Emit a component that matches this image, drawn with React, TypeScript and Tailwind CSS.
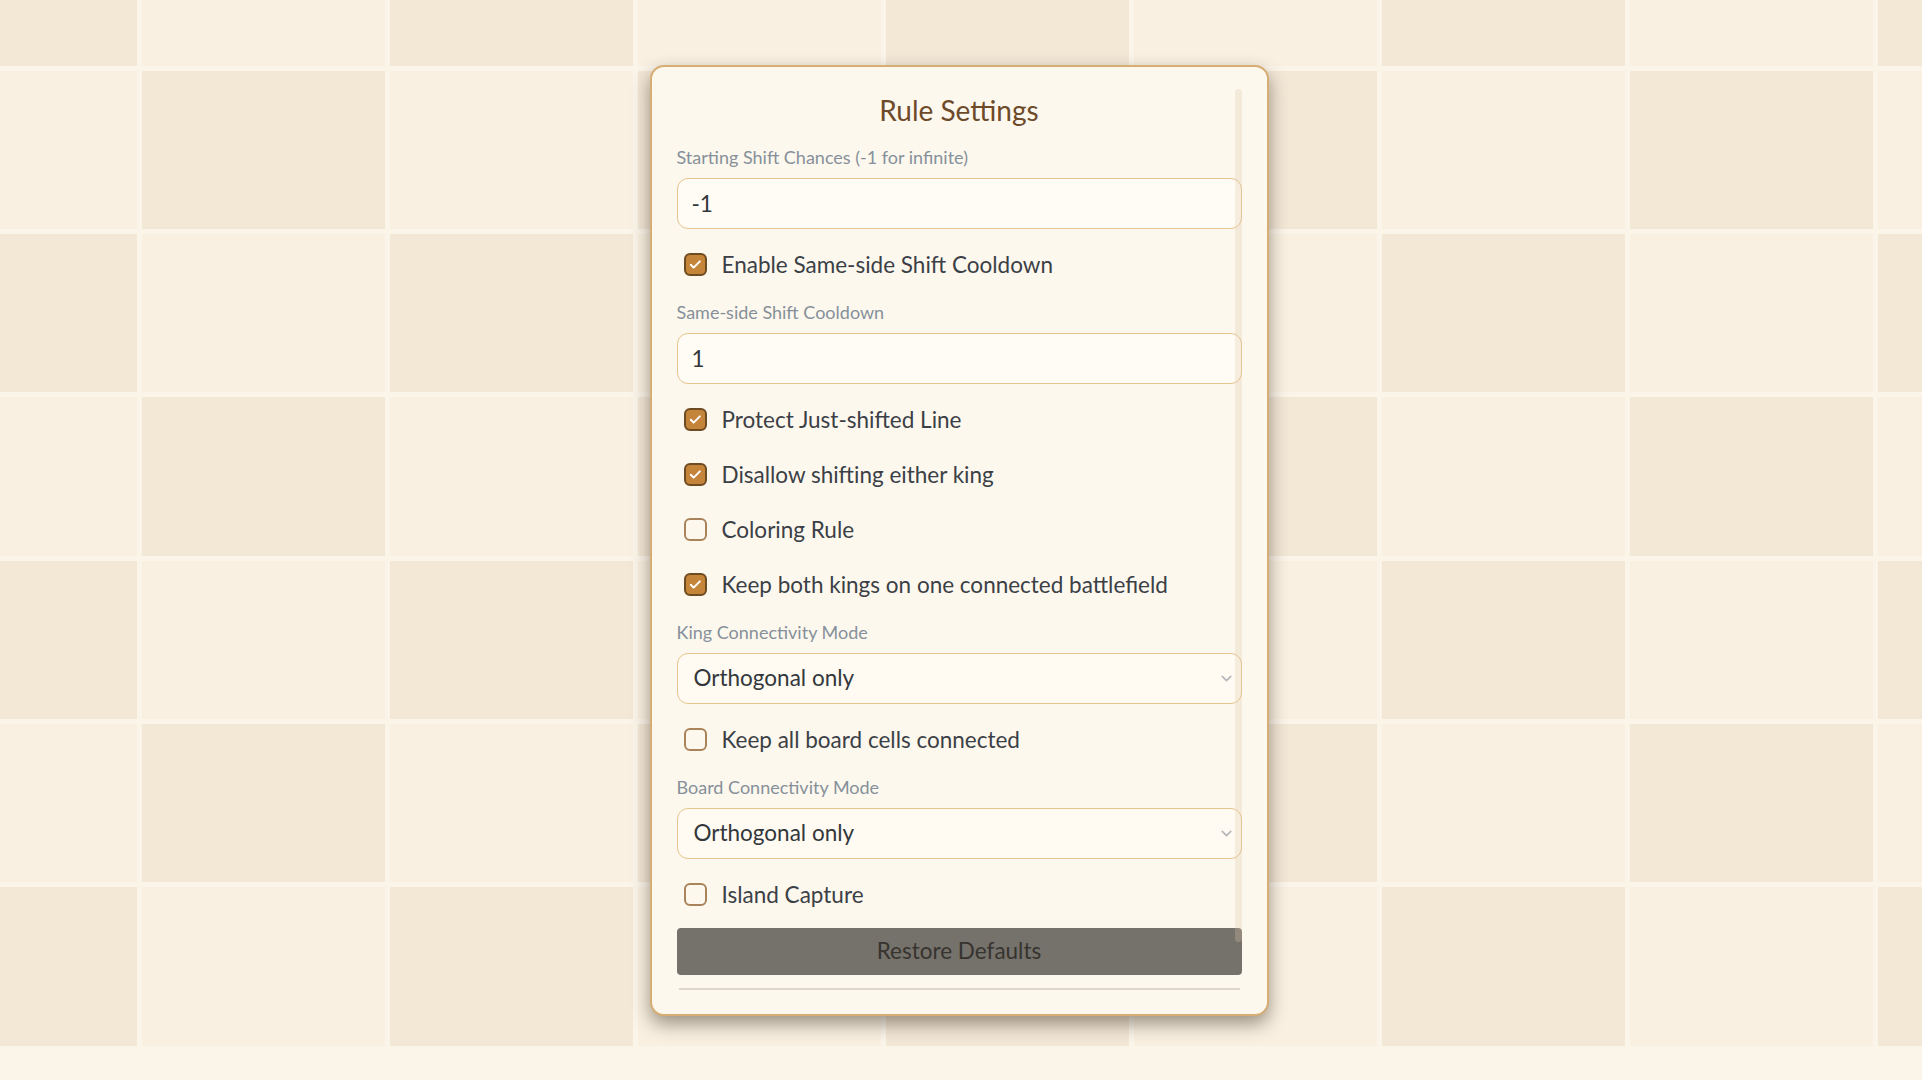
import { useState } from 'react';
import { ChevronDown } from 'lucide-react';

// Board background: 9 columns x 7 rows, offset so the cells sit like the screenshot
const COLS = 9;
const ROWS = 7;

function BoardBackground() {
  const cells = [];
  for (let r = 0; r < ROWS; r++) {
    for (let c = 0; c < COLS; c++) {
      cells.push(
        <div key={`${r}-${c}`} className={(r + c) % 2 === 0 ? 'bg-[#f3e7d6]' : 'bg-[#f9f0e1]'} />
      );
    }
  }
  return (
    <div className="absolute inset-0 overflow-hidden">
      <div className="-ml-[106.5px] -mt-[92.8px] grid grid-cols-[repeat(9,243px)] grid-rows-[repeat(7,158.33px)] gap-[5px]">
        {cells}
      </div>
    </div>
  );
}

function FieldLabel({ children }: { children: React.ReactNode }) {
  return <div className="h-[22px] text-[18px] leading-[22px] text-[#86909a]">{children}</div>;
}

function CheckRow({
  label,
  checked,
  onToggle,
}: {
  label: string;
  checked: boolean;
  onToggle: () => void;
}) {
  return (
    <label className="flex h-[38px] cursor-pointer items-center gap-[15px] pl-[7px]" onClick={onToggle}>
      {checked ? (
        <span className="flex h-[23px] w-[23px] items-center justify-center rounded-[6px] border-2 border-[#6f4b22] bg-[#c4843a]">
          <svg viewBox="0 0 24 24" className="h-[15px] w-[15px]" fill="none" stroke="#ffffff" strokeWidth={3.2} strokeLinecap="round" strokeLinejoin="round">
            <path d="M4.5 12.5l4.5 4.5 10-10" />
          </svg>
        </span>
      ) : (
        <span className="h-[23px] w-[23px] rounded-[6px] border-2 border-[#a9835a] bg-[#fdf8ee]" />
      )}
      <span className="text-[22.5px] leading-[38px] text-[#3b4046]">{label}</span>
    </label>
  );
}

function SelectBox({ value, onChange }: { value: string; onChange: (v: string) => void }) {
  return (
    <div className="relative">
      <select
        value={value}
        onChange={(e) => onChange(e.target.value)}
        className="h-[51px] w-full appearance-none rounded-[11px] border-[1.5px] border-[#e6c48f] bg-[#fffbf2] pl-[16px] text-[22.5px] text-[#33373b] outline-none"
      >
        <option>Orthogonal only</option>
        <option>Orthogonal and diagonal</option>
      </select>
      <ChevronDown className="pointer-events-none absolute right-[7px] top-[17px] h-[17px] w-[17px] text-[#b9b7bd]" strokeWidth={2.4} />
    </div>
  );
}

export default function App() {
  const [chances, setChances] = useState('-1');
  const [cooldown, setCooldown] = useState('1');
  const [flags, setFlags] = useState({
    cooldown: true,
    protect: true,
    noKing: true,
    coloring: false,
    kings: true,
    cells: false,
    island: false,
  });
  const [kingMode, setKingMode] = useState('Orthogonal only');
  const [boardMode, setBoardMode] = useState('Orthogonal only');

  const toggle = (key: keyof typeof flags) => setFlags((f) => ({ ...f, [key]: !f[key] }));

  return (
    <div className="relative flex h-screen w-full items-center justify-center overflow-hidden bg-[#fbf4e9] font-['Lato','Open_Sans',sans-serif]">
      <BoardBackground />

      {/* Rule settings card */}
      <div className="relative mr-[4px] flex w-[619px] flex-col gap-[17px] rounded-[14px] border-2 border-[#d6ad72] bg-[#fdf8ee] px-[25px] pb-[24px] pt-[24px] shadow-[0_8px_18px_rgba(40,30,20,0.45)]">
        <h2 className="h-[38px] text-center text-[28px] leading-[38px] text-[#6d4a29]">Rule Settings</h2>

        <div className="flex flex-col gap-[10px]">
          <FieldLabel>Starting Shift Chances (-1 for infinite)</FieldLabel>
          <input
            type="text"
            value={chances}
            onChange={(e) => setChances(e.target.value)}
            className="h-[51px] w-full rounded-[11px] border-[1.5px] border-[#e6c48f] bg-[#fffcf5] px-[14px] text-[22.5px] text-[#33373b] outline-none"
          />
        </div>

        <CheckRow label="Enable Same-side Shift Cooldown" checked={flags.cooldown} onToggle={() => toggle('cooldown')} />

        <div className="flex flex-col gap-[10px]">
          <FieldLabel>Same-side Shift Cooldown</FieldLabel>
          <input
            type="text"
            value={cooldown}
            onChange={(e) => setCooldown(e.target.value)}
            className="h-[51px] w-full rounded-[11px] border-[1.5px] border-[#e6c48f] bg-[#fffcf5] px-[14px] text-[22.5px] text-[#33373b] outline-none"
          />
        </div>

        <CheckRow label="Protect Just-shifted Line" checked={flags.protect} onToggle={() => toggle('protect')} />
        <CheckRow label="Disallow shifting either king" checked={flags.noKing} onToggle={() => toggle('noKing')} />
        <CheckRow label="Coloring Rule" checked={flags.coloring} onToggle={() => toggle('coloring')} />
        <CheckRow label="Keep both kings on one connected battlefield" checked={flags.kings} onToggle={() => toggle('kings')} />

        <div className="flex flex-col gap-[10px]">
          <FieldLabel>King Connectivity Mode</FieldLabel>
          <SelectBox value={kingMode} onChange={setKingMode} />
        </div>

        <CheckRow label="Keep all board cells connected" checked={flags.cells} onToggle={() => toggle('cells')} />

        <div className="flex flex-col gap-[10px]">
          <FieldLabel>Board Connectivity Mode</FieldLabel>
          <SelectBox value={boardMode} onChange={setBoardMode} />
        </div>

        <CheckRow label="Island Capture" checked={flags.island} onToggle={() => toggle('island')} />

        <div className="-mt-[3px] flex flex-col gap-[13px]">
          <button
            type="button"
            className="h-[47px] w-full rounded-[4px] bg-[#75716b] text-[22.5px] text-[#37342f]"
          >
            Restore Defaults
          </button>
          <div className="mx-[2px] h-[2px] bg-[#ddd6cb]" />
        </div>

        {/* scroll thumb overlay */}
        <div className="pointer-events-none absolute right-[25px] top-[22px] h-[853px] w-[7px] rounded-full bg-[rgba(222,199,166,0.28)]" />
      </div>
    </div>
  );
}
